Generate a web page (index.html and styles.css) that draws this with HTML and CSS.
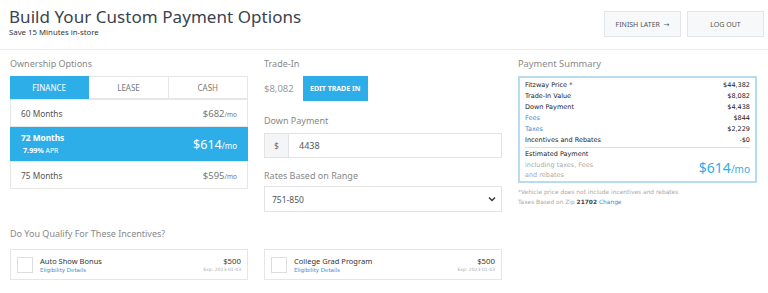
FILE: index.html
```html
<!DOCTYPE html>
<html>
<head>
<meta charset="utf-8">
<link rel="stylesheet" href="styles.css">
</head>
<body>
<header class="header">
  <div class="titles">
    <h1 class="title">Build Your Custom Payment Options</h1>
    <div class="subtitle">Save 15 Minutes in-store</div>
  </div>
  <div class="header-actions">
    <button class="hbtn">FINISH LATER &nbsp;&rarr;</button>
    <button class="hbtn">LOG OUT</button>
  </div>
</header>
<main class="main">
  <section class="col">
    <div class="label">Ownership Options</div>
    <div class="box">
      <div class="tabs">
        <div class="tab active">FINANCE</div>
        <div class="tab">LEASE</div>
        <div class="tab">CASH</div>
      </div>
      <div class="term">
        <span>60 Months</span>
        <span class="price">$682<small>/mo</small></span>
      </div>
      <div class="term selected">
        <div class="term-info">
          <span class="term-name">72 Months</span>
          <span class="apr"><b>7.99%</b> APR</span>
        </div>
        <span class="price big">$614<small>/mo</small></span>
      </div>
      <div class="term">
        <span>75 Months</span>
        <span class="price">$595<small>/mo</small></span>
      </div>
    </div>
  </section>
  <section class="col">
    <div class="label">Trade-In</div>
    <div class="trade">
      <span class="trade-val">$8,082</span>
      <button class="blue-btn">EDIT TRADE IN</button>
    </div>
    <div class="label label-gap">Down Payment</div>
    <div class="input-group">
      <span class="addon">$</span>
      <span class="input">4438</span>
    </div>
    <div class="label label-gap2">Rates Based on Range</div>
    <div class="select">
      <span>751-850</span>
      <svg width="8" height="6" viewBox="0 0 8 6"><path d="M1 1.5 L4 4.5 L7 1.5" fill="none" stroke="#333" stroke-width="1.4"/></svg>
    </div>
  </section>
  <section class="col">
    <div class="label label-lg">Payment Summary</div>
    <div class="summary">
      <div class="srow"><span>Fitzway Price *</span><span>$44,382</span></div>
      <div class="srow"><span>Trade-In Value</span><span>$8,082</span></div>
      <div class="srow"><span>Down Payment</span><span>$4,438</span></div>
      <div class="srow"><span class="link">Fees</span><span>$844</span></div>
      <div class="srow"><span class="link">Taxes</span><span>$2,229</span></div>
      <div class="srow"><span>Incentives and Rebates</span><span>-$0</span></div>
      <div class="est">
        <div class="est-left">
          <div class="est-title">Estimated Payment</div>
          <div class="est-note">including taxes, Fees<br>and rebates</div>
        </div>
        <div class="est-price">$614<small>/mo</small></div>
      </div>
    </div>
    <div class="foot">*Vehicle price does not include incentives and rebates<br>Taxes Based on Zip <b>21702</b> <span class="link">Change</span></div>
  </section>
</main>
<section class="incentives">
  <div class="label">Do You Qualify For These Incentives?</div>
  <div class="cards">
    <div class="card">
      <span class="check"></span>
      <div class="card-info">
        <div class="card-name">Auto Show Bonus</div>
        <div class="card-link">Eligibility Details</div>
      </div>
      <div class="card-right">
        <div class="card-amt">$500</div>
        <div class="card-exp">Exp: 2023-01-03</div>
      </div>
    </div>
    <div class="card">
      <span class="check"></span>
      <div class="card-info">
        <div class="card-name">College Grad Program</div>
        <div class="card-link">Eligibility Details</div>
      </div>
      <div class="card-right">
        <div class="card-amt">$500</div>
        <div class="card-exp">Exp: 2023-01-03</div>
      </div>
    </div>
    <div class="card-spacer"></div>
  </div>
</section>
</body>
</html>
```
FILE: styles.css
```css
* { box-sizing: border-box; }
body {
  margin: 0;
  font-family: "Noto Sans", "DejaVu Sans", sans-serif;
  color: #333;
  background: #fff;
  width: 768px;
  height: 293px;
  overflow: hidden;
}
.header {
  display: flex;
  justify-content: space-between;
  align-items: flex-start;
  height: 50px;
  border-bottom: 1px solid #ececec;
  padding: 0 4px 0 9px;
}
.title {
  margin: 6px 0 0;
  font-size: 17px;
  font-weight: 400;
  letter-spacing: 0.05px;
  color: #3a4350;
  line-height: 22px;
}
.subtitle {
  font-size: 7.8px;
  color: #2f3640;
  line-height: 11px;
  margin-top: -1px;
}
.header-actions {
  display: flex;
  gap: 6px;
  margin-top: 11px;
}
.hbtn {
  width: 77px;
  height: 26px;
  background: #f7f8fa;
  border: 1px solid #e3e6ea;
  font-family: inherit;
  font-size: 7px;
  color: #555;
  padding: 0;
}
.main {
  display: grid;
  grid-template-columns: 238px 238px 239px;
  column-gap: 16px;
  padding: 8px 0 0 10px;
}
.label {
  font-size: 9px;
  color: #888;
  line-height: 12px;
  margin-bottom: 6px;
}
.label-lg { font-size: 9.3px; color: #8a8a8a; }
.label-gap { margin-top: 14px; }
.label-gap2 { margin-top: 12px; margin-bottom: 4px; }
.box { border: 1px solid #e6e6e6; }
.tabs { display: flex; height: 24px; border-bottom: 1px solid #e6e6e6; margin: -1px -1px 0; }
.tab {
  flex: 1;
  display: flex;
  align-items: center;
  justify-content: center;
  font-size: 8px;
  color: #777;
  border: 1px solid #e6e6e6;
  border-left: none;
}
.tab.active { background: #2eaee8; color: #fff; border-color: #2eaee8; }
.term {
  display: flex;
  justify-content: space-between;
  align-items: center;
  height: 27px;
  padding: 0 10px;
  font-size: 8.3px;
  color: #555;
  border-bottom: 1px solid #e6e6e6;
}
.term:last-child { border-bottom: none; height: 26px; }
.price { font-size: 9.5px; color: #777; }
.price small { font-size: 6.5px; }
.term.selected {
  background: #2eaee8;
  color: #fff;
  height: 35px;
  margin: 0 -1px;
  padding: 0 11px;
}
.term-info { display: flex; flex-direction: column; line-height: 12px; }
.term-name { font-weight: 700; font-size: 8.3px; }
.apr { font-size: 6.8px; padding-left: 2px; }
.apr b { font-size: 7.2px; }
.price.big { color: #fff; font-size: 12.5px; }
.price.big small { font-size: 8px; }
.trade { display: flex; align-items: center; gap: 9px; height: 25px; }
.trade-val { font-size: 9.5px; color: #999; }
.blue-btn {
  background: #2eaee8;
  color: #fff;
  border: none;
  height: 25px;
  width: 65px;
  font-family: inherit;
  font-size: 7px;
  font-weight: 700;
  padding: 0;
}
.input-group { display: flex; height: 25px; border: 1px solid #e3e3e3; }
.addon {
  width: 24px;
  background: #f4f5f7;
  border-right: 1px solid #e3e3e3;
  display: flex; align-items: center; justify-content: center;
  font-size: 8px; color: #666;
}
.input { display: flex; align-items: center; padding-left: 10px; font-size: 9px; color: #555; }
.select {
  height: 26px;
  border: 1px solid #e3e3e3;
  display: flex; align-items: center; justify-content: space-between;
  padding: 0 5px 0 7px;
  font-size: 8.5px; color: #555;
}
.summary {
  border: 2px solid #b7dcee;
  padding: 2px 5px 3px 5px;
  height: 107px;
  font-family: "DejaVu Sans", sans-serif;
}
.srow {
  display: flex; justify-content: space-between;
  font-size: 6.5px; line-height: 11px; color: #222;
}
.link { color: #3a8fd0; }
.est {
  border-top: 1px solid #ddd;
  margin-top: 1px;
  padding-top: 1px;
  display: flex; justify-content: space-between; align-items: flex-end;
}
.est-title { font-size: 6.5px; color: #222; line-height: 10px; }
.est-note { font-size: 6.5px; color: #aaa; line-height: 10px; margin-top: 1px; }
.est-price { font-family: "Noto Sans", sans-serif; font-size: 14px; color: #2eaee8; line-height: 18px; margin-bottom: 2px; }
.est-price small { font-size: 10px; }
.foot {
  font-family: "DejaVu Sans", sans-serif;
  font-size: 5.9px; color: #aaa; line-height: 10px; margin-top: 4px;
}
.foot b { color: #444; }
.incentives { padding: 16px 0 0 10px; }
.incentives .label { margin-bottom: 9px; }
.cards {
  display: grid;
  grid-template-columns: 238px 238px 239px;
  column-gap: 16px;
}
.card {
  height: 31px;
  border: 1px solid #e6e6e6;
  display: flex; align-items: center;
  padding: 0 6px 0 6px;
}
.check { width: 16px; height: 16px; border: 1px solid #ddd; margin-right: 7px; flex: none; }
.card-info { flex: 1; }
.card-name { font-size: 7.5px; color: #333; line-height: 10px; }
.card-link { font-family: "DejaVu Sans", sans-serif; font-size: 5.5px; color: #3a8fd0; line-height: 8px; }
.card-right { text-align: right; }
.card-amt { font-size: 7.8px; color: #333; line-height: 10px; }
.card-exp { font-family: "DejaVu Sans", sans-serif; font-size: 4.5px; color: #aaa; line-height: 8px; }
```
